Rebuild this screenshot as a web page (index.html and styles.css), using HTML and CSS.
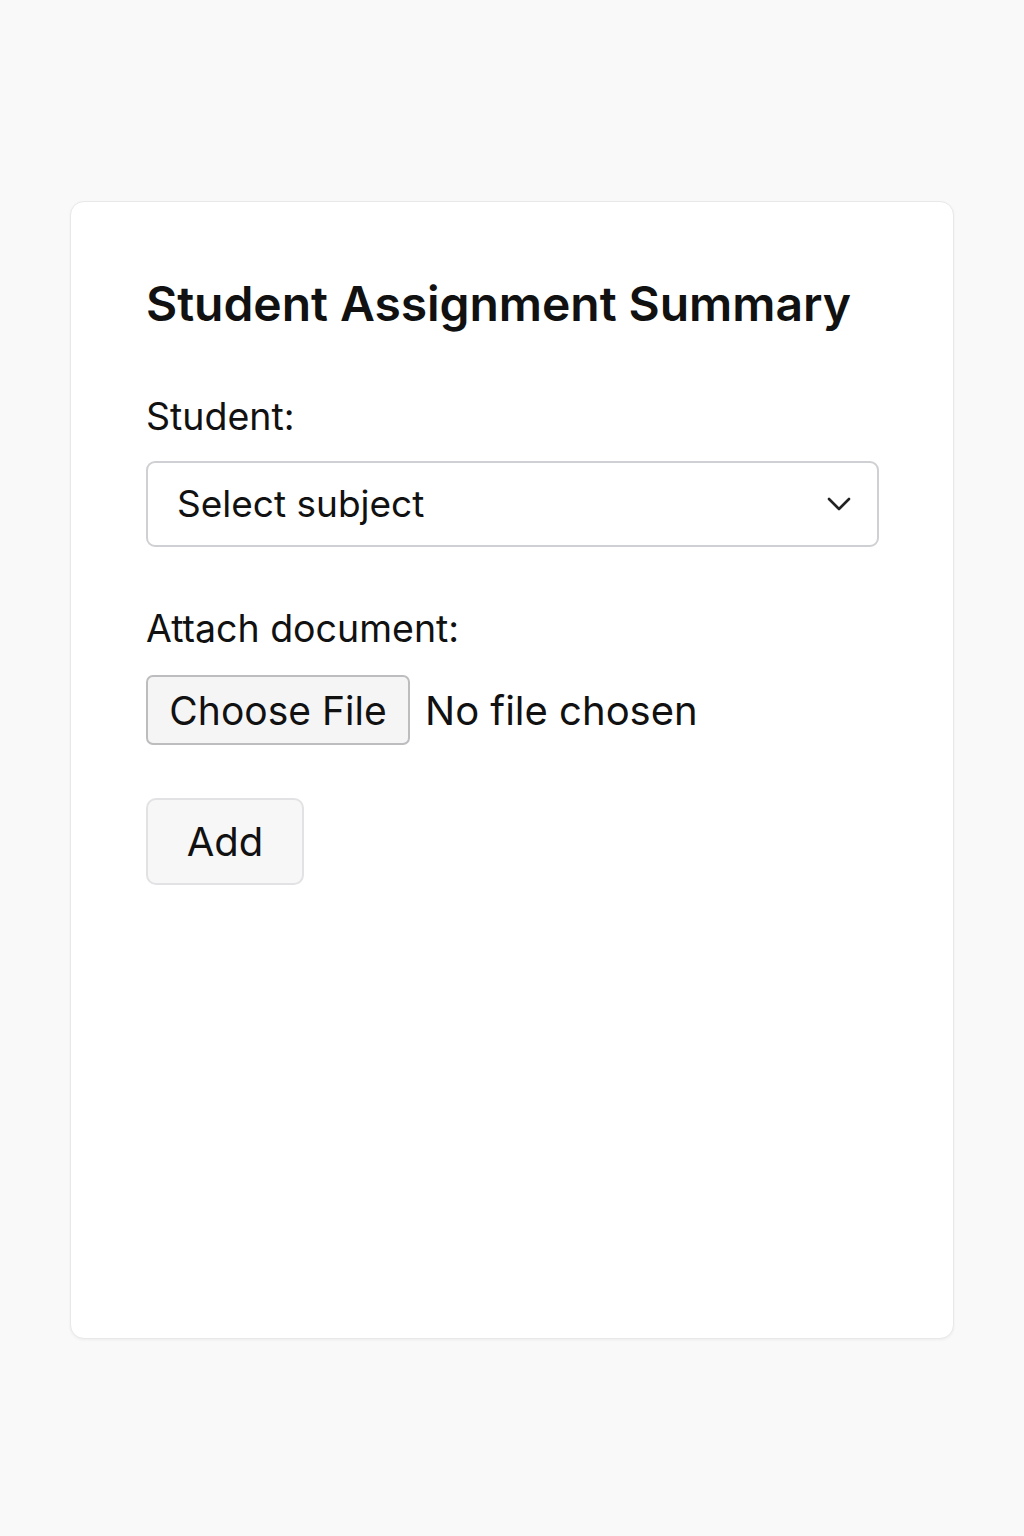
FILE: index.html
```html
<!DOCTYPE html>
<html lang="en">
<head>
<meta charset="utf-8">
<title>Student Assignment Summary</title>
<link rel="stylesheet" href="styles.css">
</head>
<body>
<main class="page">
  <section class="card">
    <h1 class="title">Student Assignment Summary</h1>
    <label class="label" for="student">Student:</label>
    <div class="select">
      <span class="select-text">Select subject</span>
      <svg class="chevron" width="24" height="14" viewBox="0 0 24 14" aria-hidden="true">
        <path d="M2 2 L12 12 L22 2" fill="none" stroke="#222" stroke-width="2.6" stroke-linecap="round" stroke-linejoin="round"/>
      </svg>
    </div>
    <label class="label label-attach">Attach document:</label>
    <div class="file-row">
      <span class="file-btn">Choose File</span>
      <span class="file-name">No file chosen</span>
    </div>
    <button class="add-btn" type="button">Add</button>
  </section>
</main>
</body>
</html>
```
FILE: styles.css
```css
* { box-sizing: border-box; }
html, body { margin: 0; padding: 0; }
body {
  background: #f9f9f9;
  font-family: Inter, "Liberation Sans", Arial, sans-serif;
  color: #111;
  width: 1024px;
  height: 1536px;
}
.page {
  padding: 201px 70px 0 70px;
}
.card {
  background: #fff;
  border: 1px solid #e8e8ea;
  border-radius: 14px;
  box-shadow: 0 1px 3px rgba(0,0,0,0.05);
  height: 1138px;
  padding: 73px 75px;
  display: flex;
  flex-direction: column;
  align-items: flex-start;
}
.title {
  margin: 0;
  font-size: 48px;
  line-height: 58px;
  font-weight: 600;
  letter-spacing: -0.05px;
  color: #111;
}
.label {
  display: block;
  margin-top: 62px;
  font-size: 37.5px;
  line-height: 44px;
  color: #111;
}
.select {
  margin-top: 22px;
  width: 733px;
  height: 86px;
  border: 2px solid #cfd0d4;
  border-radius: 9px;
  display: flex;
  align-items: center;
  justify-content: space-between;
  padding: 0 26px 0 29px;
}
.select-text {
  font-size: 37px;
  line-height: 46px;
  color: #111;
}
.chevron { display: block; }
.label-attach {
  margin-top: 60px;
}
.file-row {
  margin-top: 24px;
  display: flex;
  align-items: center;
  gap: 15px;
}
.file-btn {
  height: 70px;
  width: 264px;
  display: flex;
  align-items: center;
  justify-content: center;
  border: 2px solid #bdbdc0;
  border-radius: 7px;
  background: #f5f5f6;
  font-size: 39px;
  color: #111;
}
.file-name {
  font-size: 40px;
  color: #111;
}
.add-btn {
  margin-top: 53px;
  width: 158px;
  height: 87px;
  border: 2px solid #e2e2e4;
  border-radius: 10px;
  background: #f7f7f8;
  font-family: inherit;
  font-size: 40px;
  color: #111;
  padding: 0;
}
```
